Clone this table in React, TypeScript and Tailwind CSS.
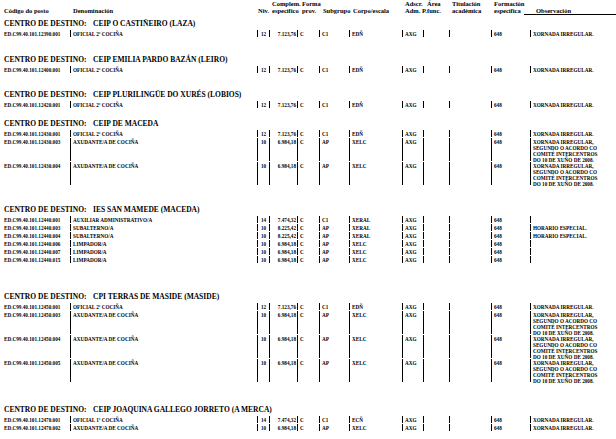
import React from "react";

type Row = {
  code: string;
  den: string;
  niv: string;
  comp: string;
  forma: string;
  sub: string;
  corpo: string;
  adscr: string;
  form: string;
  obs: string[];
  tall?: boolean;
};

type Section = { mt: string; name: string; rows: Row[] };

const XI = ["XORNADA IRREGULAR."];
const XL = ["XORNADA IRREGULAR,", "SEGUNDO O ACORDO CO", "COMITÉ INTERCENTROS", "DO 10 DE XUÑO DE 2008."];

const oficial = (code: string): Row => ({
  code,
  den: "OFICIAL 2ª COCIÑA",
  niv: "12",
  comp: "7.123,76",
  forma: "C",
  sub: "C1",
  corpo: "EDÑ",
  adscr: "AXG",
  form: "648",
  obs: XI,
});

const axudante = (code: string): Row => ({
  code,
  den: "AXUDANTE/A DE COCIÑA",
  niv: "10",
  comp: "6.984,18",
  forma: "C",
  sub: "AP",
  corpo: "XELC",
  adscr: "AXG",
  form: "648",
  obs: XL,
  tall: true,
});

const limpador = (code: string): Row => ({
  code,
  den: "LIMPADOR/A",
  niv: "10",
  comp: "6.984,18",
  forma: "C",
  sub: "AP",
  corpo: "XELC",
  adscr: "AXG",
  form: "648",
  obs: [],
});

const subalterno = (code: string): Row => ({
  code,
  den: "SUBALTERNO/A",
  niv: "10",
  comp: "8.225,42",
  forma: "C",
  sub: "AP",
  corpo: "XERAL",
  adscr: "AXG",
  form: "648",
  obs: ["HORARIO ESPECIAL."],
});

const sections: Section[] = [
  { mt: "mt-[4px]", name: "CEIP O CASTIÑEIRO (LAZA)", rows: [oficial("ED.C99.40.101.12390.001")] },
  { mt: "mt-[17px]", name: "CEIP EMILIA PARDO BAZÁN (LEIRO)", rows: [oficial("ED.C99.40.101.12400.001")] },
  { mt: "mt-[16px]", name: "CEIP PLURILINGÜE DO XURÉS (LOBIOS)", rows: [oficial("ED.C99.40.101.12420.001")] },
  {
    mt: "mt-[10px]",
    name: "CEIP DE MACEDA",
    rows: [
      oficial("ED.C99.40.101.12430.001"),
      axudante("ED.C99.40.101.12430.003"),
      axudante("ED.C99.40.101.12430.004"),
    ],
  },
  {
    mt: "mt-[19px]",
    name: "IES SAN MAMEDE (MACEDA)",
    rows: [
      {
        code: "ED.C99.40.101.12440.001",
        den: "AUXILIAR ADMINISTRATIVO/A",
        niv: "14",
        comp: "7.474,32",
        forma: "C",
        sub: "C1",
        corpo: "XERAL",
        adscr: "AXG",
        form: "648",
        obs: [],
      },
      subalterno("ED.C99.40.101.12440.003"),
      subalterno("ED.C99.40.101.12440.004"),
      limpador("ED.C99.40.101.12440.006"),
      limpador("ED.C99.40.101.12440.007"),
      limpador("ED.C99.40.101.12440.015"),
    ],
  },
  {
    mt: "mt-[28px]",
    name: "CPI TERRAS DE MASIDE (MASIDE)",
    rows: [
      oficial("ED.C99.40.101.12450.001"),
      axudante("ED.C99.40.101.12450.003"),
      axudante("ED.C99.40.101.12450.004"),
      axudante("ED.C99.40.101.12450.005"),
    ],
  },
  {
    mt: "mt-[22px]",
    name: "CEIP JOAQUINA GALLEGO JORRETO (A MERCA)",
    rows: [
      {
        code: "ED.C99.40.101.12470.001",
        den: "OFICIAL 1ª COCIÑA",
        niv: "14",
        comp: "7.474,32",
        forma: "C",
        sub: "C1",
        corpo: "ECÑ",
        adscr: "AXG",
        form: "648",
        obs: XI,
      },
      { ...axudante("ED.C99.40.101.12470.002"), obs: XI, tall: false },
    ],
  },
];

const cell = "shrink-0 border-l border-black pl-[2px] pt-[1px] whitespace-nowrap";

function TableRow({ r }: { r: Row }) {
  return (
    <div className={`flex items-start ${r.tall ? "h-[24px]" : "h-[8px]"}`}>
      <div className={`flex items-start w-full ${r.tall ? "h-[23px]" : "h-[7px]"}`}>
        <div className="w-[70px] shrink-0 pl-[4px] pt-[1px] whitespace-nowrap">{r.code}</div>
        <div className={`${cell} w-[187px] h-full`}>{r.den}</div>
        <div className="shrink-0 border-l border-black w-[12px] h-full pt-[1px] text-center">{r.niv}</div>
        <div className="shrink-0 border-l border-black w-[28px] h-full pt-[1px] pr-[1px] text-right whitespace-nowrap">
          {r.comp}
        </div>
        <div className={`${cell} w-[22px] h-full`}>{r.forma}</div>
        <div className={`${cell} w-[30px] h-full`}>{r.sub}</div>
        <div className={`${cell} w-[53px] h-full`}>{r.corpo}</div>
        <div className={`${cell} w-[21px] h-full`}>{r.adscr}</div>
        <div className={`${cell} w-[26px] h-full`}></div>
        <div className={`${cell} w-[42px] h-full`}></div>
        <div className={`${cell} w-[39px] h-full`}>{r.form}</div>
        <div className={`${cell} w-[86px] h-full`}>
          {r.obs.map((o, i) => (
            <div key={i} className="leading-[6px]">
              {o}
            </div>
          ))}
        </div>
      </div>
    </div>
  );
}

export default function App() {
  return (
    <div
      className="w-[616px] h-[439px] bg-white text-black overflow-hidden font-bold"
      style={{ fontFamily: '"Liberation Serif", "Times New Roman", serif' }}
    >
      {/* header */}
      <div className="flex h-[15px] text-[6.5px] leading-[7px]">
        <div className="w-[70px] shrink-0 pl-[4px] pt-[7px] whitespace-nowrap">Código do posto</div>
        <div className="w-[187px] shrink-0 pl-[3px] pt-[7px]">Denominación</div>
        <div className="w-[13px] shrink-0 pl-[1px] pt-[7px]">Niv.</div>
        <div className="w-[30px] shrink-0 pl-[2px] whitespace-nowrap">
          <div>Complem.</div>
          <div>específico</div>
        </div>
        <div className="w-[21px] shrink-0 pl-[2px]">
          <div>Forma</div>
          <div>prov.</div>
        </div>
        <div className="w-[30px] shrink-0 pl-[2px] pt-[7px]">Subgrupo</div>
        <div className="w-[53px] shrink-0 pl-[2px] pt-[7px] whitespace-nowrap">Corpo/escala</div>
        <div className="w-[21px] shrink-0 pl-[1px] whitespace-nowrap">
          <div>Adscr.</div>
          <div>Adm. P.</div>
        </div>
        <div className="w-[26px] shrink-0 pl-[2px]">
          <div>Área</div>
          <div>func.</div>
        </div>
        <div className="w-[42px] shrink-0 pl-[1px]">
          <div>Titulación</div>
          <div>académica</div>
        </div>
        <div className="w-[31px] shrink-0 pl-[1px] whitespace-nowrap">
          <div>Formación</div>
          <div>específica</div>
        </div>
        <div className="w-[94px] shrink-0 pl-[12px] pt-[7px] border-b border-black whitespace-nowrap">
          Observación
        </div>
      </div>

      {sections.map((s, si) => (
        <div key={si} className={s.mt}>
          <div className="flex h-[11px] text-[7.5px] leading-[10px] whitespace-nowrap">
            <div className="w-[93px] shrink-0 pl-[4px]">CENTRO DE DESTINO:</div>
            <div>{s.name}</div>
          </div>
          <div className="text-[5.2px] leading-[6px]">
            {s.rows.map((r, ri) => (
              <TableRow key={ri} r={r} />
            ))}
          </div>
        </div>
      ))}
    </div>
  );
}
